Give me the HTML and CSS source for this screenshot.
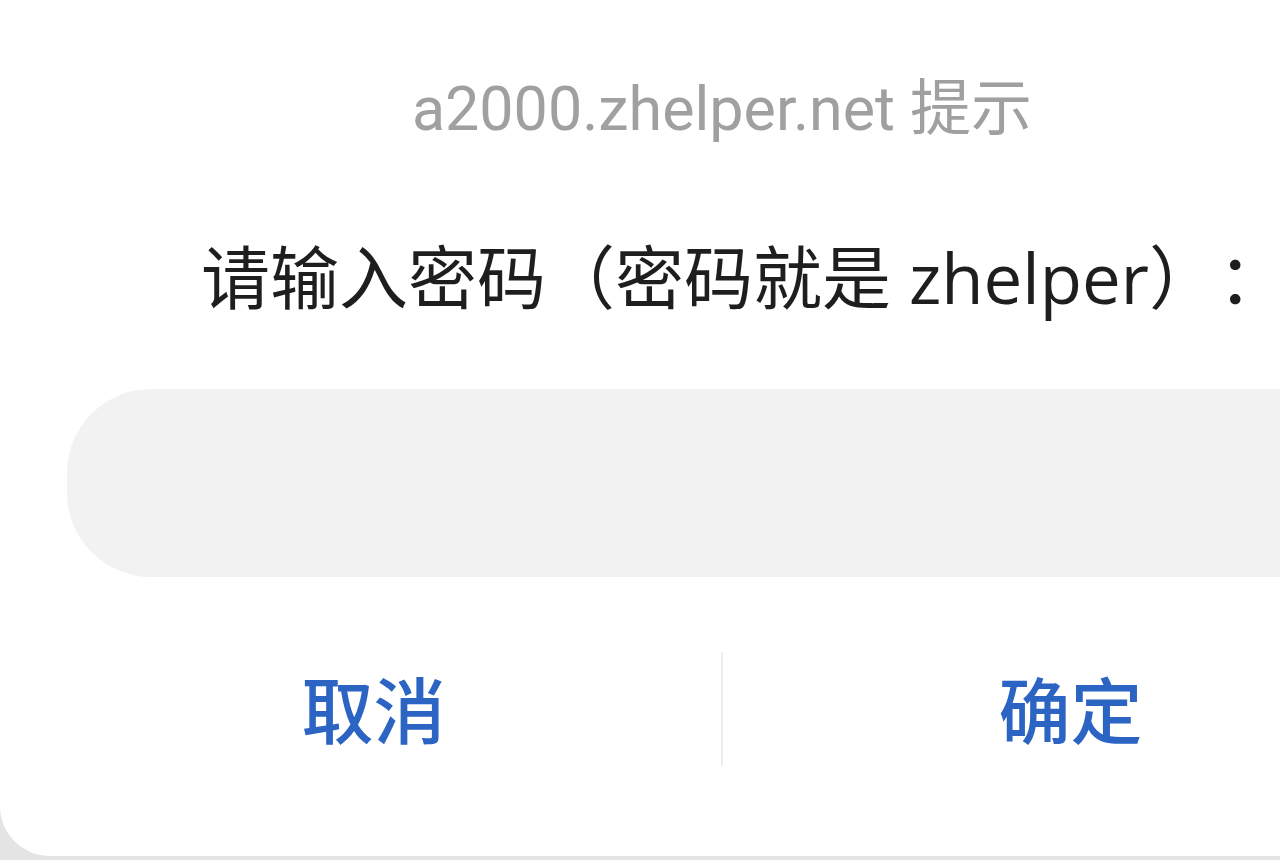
FILE: index.html
```html
<!DOCTYPE html>
<html lang="zh-CN">
<head>
<meta charset="utf-8">
<title>a2000.zhelper.net 提示</title>
<link rel="stylesheet" href="styles.css">
</head>
<body>
<div class="dialog">
  <div class="title">a2000.zhelper.net 提示</div>
  <div class="message">请输入密码（密码就是 zhelper）：</div>
  <div class="input"></div>
  <div class="actions">
    <div class="btn">取消</div>
    <div class="divider"></div>
    <div class="btn">确定</div>
  </div>
</div>
</body>
</html>
```
FILE: styles.css
```css
html, body {
  margin: 0;
  padding: 0;
  background: #e4e4e4;
  overflow: hidden;
}
body {
  width: 1280px;
  height: 860px;
  font-family: Roboto, "Noto Sans CJK SC", sans-serif;
}
.dialog {
  width: 1444px;
  height: 856px;
  background: #ffffff;
  border-bottom-left-radius: 50px;
  border-bottom-right-radius: 50px;
  display: flex;
  flex-direction: column;
  align-items: center;
}
.title {
  margin-top: 74px;
  font-size: 61px;
  line-height: 70px;
  color: #a0a0a0;
  white-space: nowrap;
}
.message {
  margin-top: 94px;
  margin-left: 44px;
  font-family: "Open Sans", "Noto Sans CJK SC", sans-serif;
  font-size: 69px;
  line-height: 78px;
  color: #1e1e1e;
  white-space: nowrap;
  text-spacing-trim: space-all;
}
.input {
  align-self: stretch;
  margin: 73px 67px 0;
  height: 188px;
  border-radius: 84px;
  background: #f2f2f2;
}
.actions {
  align-self: stretch;
  display: flex;
  align-items: center;
  margin-top: 75px;
  padding: 0 26px;
  height: 114px;
}
.btn {
  flex: 1;
  text-align: center;
  font-size: 72px;
  font-weight: 500;
  color: #2c64c4;
  line-height: 80px;
  margin-top: 10px;
}
.divider {
  width: 2px;
  height: 114px;
  background: #eeeeee;
}
```
